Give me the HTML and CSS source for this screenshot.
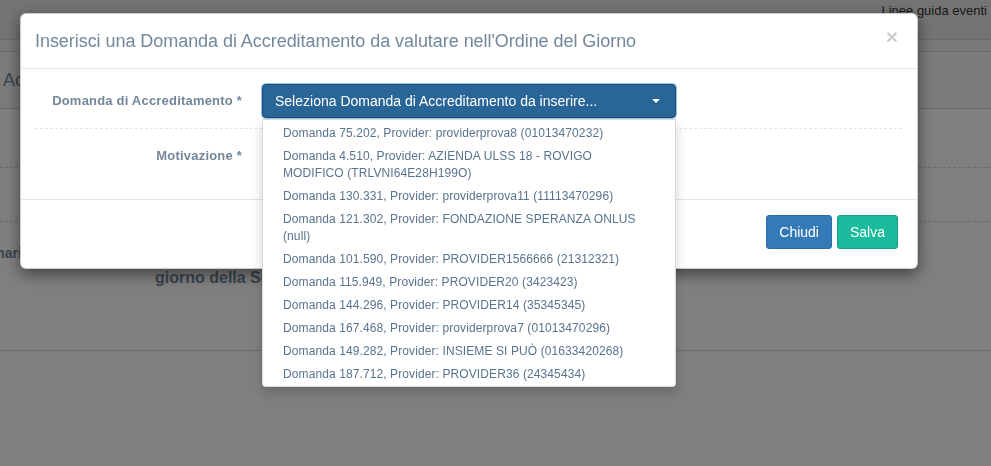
FILE: index.html
```html
<!DOCTYPE html>
<html lang="it">
<head>
  <meta charset="UTF-8" />
  <meta name="viewport" content="width=device-width, initial-scale=1.0"/>
  <title>Seduta – Ordine del Giorno</title>
  <link rel="stylesheet" href="styles.css">
</head>
<body>
  <div class="page">
    <header class="top-nav">
      <a class="guide-link" href="#">Linee guida eventi</a>
    </header>
    <div class="sub-bar"></div>
    <div class="page-title">
      <h3>Accreditamento</h3>
    </div>
    <div class="page-body">
      <div class="page-row"></div>
      <div class="page-row short"></div>
      <div class="summary"><span>Sommario</span></div>
      <h4 class="agenda-title">giorno della Seduta</h4>
    </div>
  </div>

  <div class="modal-backdrop"></div>

  <div class="modal">
    <div class="modal-header">
      <button type="button" class="close">&times;</button>
      <h4 class="modal-title">Inserisci una Domanda di Accreditamento da valutare nell'Ordine del Giorno</h4>
    </div>

    <div class="modal-body">
      <div class="form-group first">
        <label class="control-label">Domanda di Accreditamento *</label>
        <div class="field">
          <button type="button" class="select-btn">
            <span>Seleziona Domanda di Accreditamento da inserire...</span>
            <span class="caret"></span>
          </button>
          <ul class="dropdown-menu">
            <li><a href="#">Domanda 75.202, Provider: providerprova8 (01013470232)</a></li>
            <li><a href="#">Domanda 4.510, Provider: AZIENDA ULSS 18 - ROVIGO<br>MODIFICO (TRLVNI64E28H199O)</a></li>
            <li><a href="#">Domanda 130.331, Provider: providerprova11 (11113470296)</a></li>
            <li><a href="#">Domanda 121.302, Provider: FONDAZIONE SPERANZA ONLUS<br>(null)</a></li>
            <li><a href="#">Domanda 101.590, Provider: PROVIDER1566666 (21312321)</a></li>
            <li><a href="#">Domanda 115.949, Provider: PROVIDER20 (3423423)</a></li>
            <li><a href="#">Domanda 144.296, Provider: PROVIDER14 (35345345)</a></li>
            <li><a href="#">Domanda 167.468, Provider: providerprova7 (01013470296)</a></li>
            <li><a href="#">Domanda 149.282, Provider: INSIEME SI PUÒ (01633420268)</a></li>
            <li><a href="#">Domanda 187.712, Provider: PROVIDER36 (24345434)</a></li>
          </ul>
        </div>
      </div>

      <div class="form-group">
        <label class="control-label">Motivazione *</label>
        <div class="field">
          <textarea class="form-control" name="motivazione"></textarea>
        </div>
      </div>
    </div>

    <div class="modal-footer">
      <button type="button" class="btn btn-primary">Chiudi</button>
      <button type="button" class="btn btn-success">Salva</button>
    </div>
  </div>
</body>
</html>
```

FILE: styles.css
```css
html, body {
  margin: 0;
  height: 100%;
}
body {
  font-family: "Liberation Sans", Arial, sans-serif;
  font-size: 13px;
  color: #73879c;
  background: #fff;
  overflow: hidden;
}

/* page behind the dialog */
.top-nav {
  height: 39px;
  background: #e8e8e8;
  border-bottom: 1px solid #d6d6d6;
  display: flex;
  justify-content: flex-end;
  padding-right: 4px;
}
.guide-link {
  color: #333;
  text-decoration: none;
  font-size: 13px;
  line-height: 22px;
}
.sub-bar {
  height: 11px;
  background: #f2f2f2;
  border-bottom: 1px solid #d6d6d6;
}
.page-title {
  height: 56px;
  background: #f7f7f7;
  border-bottom: 1px solid #d6d6d6;
  display: flex;
  align-items: center;
}
.page-title h3 {
  margin: 0 0 0 3px;
  font-size: 18px;
  font-weight: normal;
}
.page-body {
  height: 241px;
  border-bottom: 1px solid #d6d6d6;
}
.page-row {
  height: 58px;
  border-bottom: 1px dashed #d4d4d4;
}
.page-row.short {
  height: 53px;
}
.summary {
  font-weight: bold;
  font-size: 14px;
  margin: 23px 0 0 -38px;
}
.agenda-title {
  margin: 8px 0 0 155px;
  font-size: 16px;
}

/* dialog */
.modal-backdrop {
  position: fixed;
  inset: 0;
  background: rgba(0, 0, 0, 0.5);
}
.modal {
  position: fixed;
  top: 13px;
  left: 20px;
  width: 896px;
  background: #fff;
  border: 1px solid rgba(0, 0, 0, 0.2);
  border-radius: 6px;
  box-shadow: 0 5px 15px rgba(0, 0, 0, 0.5);
}
.modal-header {
  padding: 15px 15px 15px 14px;
  border-bottom: 1px solid #e5e5e5;
}
.modal-title {
  margin: 0;
  font-size: 18px;
  font-weight: normal;
  line-height: 24px;
  letter-spacing: -0.05px;
}
.close {
  float: right;
  margin: -3px 4px 0 0;
  padding: 0;
  border: 0;
  background: none;
  font-family: inherit;
  font-size: 21px;
  font-weight: bold;
  line-height: 1;
  color: #000;
  opacity: 0.2;
  cursor: pointer;
}
.modal-body {
  padding: 15px 15px 15px 14px;
}
.form-group {
  display: flex;
  margin-bottom: 10px;
}
.form-group.first {
  padding-bottom: 10px;
  border-bottom: 1px dashed #e5e5e5;
}
.control-label {
  width: 207px;
  padding-top: 8px;
  margin-right: 20px;
  text-align: right;
  font-weight: bold;
  line-height: 17px;
  letter-spacing: 0.2px;
}
.field {
  position: relative;
  width: 414px;
}
.select-btn {
  display: flex;
  align-items: center;
  justify-content: space-between;
  width: 100%;
  height: 34px;
  padding: 0 15px 0 12px;
  background: #2a6597;
  border: 1px solid #204d74;
  border-radius: 4px;
  box-shadow: 0 0 0 1px rgba(102, 175, 233, 0.7);
  color: #fff;
  font-family: inherit;
  font-size: 14px;
  cursor: pointer;
}
.caret {
  border-top: 4px solid #fff;
  border-left: 4px solid transparent;
  border-right: 4px solid transparent;
}
.form-control {
  display: block;
  box-sizing: border-box;
  width: 100%;
  height: 35px;
  border: 1px solid #ccc;
  border-radius: 0;
  resize: none;
}
.dropdown-menu {
  position: absolute;
  top: 100%;
  left: 0;
  z-index: 10;
  box-sizing: border-box;
  width: 100%;
  margin: 1px 0 0;
  padding: 2px 0 0;
  list-style: none;
  background: #fff;
  border: 1px solid rgba(0, 0, 0, 0.15);
  border-radius: 0 0 4px 4px;
  box-shadow: 0 6px 12px rgba(0, 0, 0, 0.175);
}
.dropdown-menu a {
  display: block;
  padding: 3px 20px;
  font-size: 12px;
  line-height: 17px;
  letter-spacing: 0.1px;
  color: #5a738e;
  text-decoration: none;
}
.modal-footer {
  display: flex;
  justify-content: flex-end;
  gap: 5px;
  padding: 15px 19px 19px;
  border-top: 1px solid #e5e5e5;
}
.btn {
  height: 34px;
  padding: 0 12px;
  border: 1px solid transparent;
  border-radius: 3px;
  color: #fff;
  font-family: inherit;
  font-size: 14px;
  cursor: pointer;
}
.btn-primary {
  background: #337ab7;
  border-color: #2e6da4;
}
.btn-success {
  background: #1abb9c;
  border-color: #169f85;
}
```
